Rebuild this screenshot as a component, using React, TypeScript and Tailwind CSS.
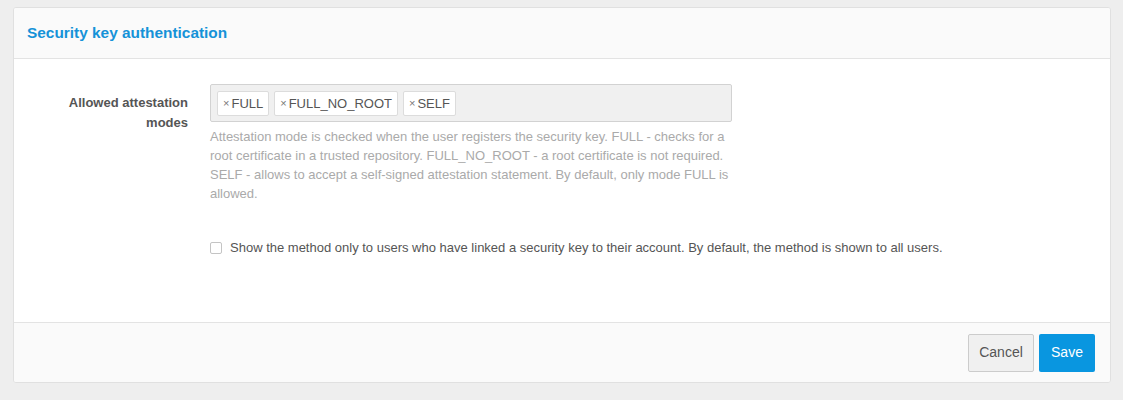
import React from "react";

const Tag = ({ label }: { label: string }) => (
  <span className="inline-flex items-center h-[25px] px-[5px] bg-white border border-[#dcdcdc] rounded-[2px] text-[13px] text-[#555] leading-none">
    <span className="text-[11px] text-[#777] mr-[2px]">×</span>
    {label}
  </span>
);

export default function App() {
  return (
    <div
      className="w-[1123px] h-[400px] bg-[#eeeeee] pt-[7px] px-[13px]"
      style={{ fontFamily: '"Liberation Sans", Arial, sans-serif' }}
    >
      <div className="w-[1098px] border border-[#e0e0e0] rounded-[3px] bg-white overflow-hidden">
        <div className="h-[51px] bg-[#fafafa] border-b border-[#e3e3e3] flex items-center pl-[13px]">
          <h2 className="text-[15.4px] font-bold text-[#1592d8]">Security key authentication</h2>
        </div>
        <div className="h-[263px] pt-[25px]">
          <div className="flex">
            <div className="w-[196px] pr-[22px] text-right pt-[9px] text-[13px] font-bold text-[#555] leading-[20px]">
              Allowed attestation
              <br />
              modes
            </div>
            <div className="w-[522px]">
              <div className="h-[38px] bg-[#f0f0f0] border border-[#d2d2d2] rounded-[2px] flex items-center gap-[5px] px-[6px]">
                <Tag label="FULL" />
                <Tag label="FULL_NO_ROOT" />
                <Tag label="SELF" />
              </div>
              <p className="mt-[5px] text-[13px] leading-[19px] text-[#aaaaaa]">
                Attestation mode is checked when the user registers the security key. FULL - checks for a root certificate in a trusted repository. FULL_NO_ROOT - a root certificate is not required. SELF - allows to accept a self-signed attestation statement. By default, only mode FULL is allowed.
              </p>
            </div>
          </div>
          <div className="flex items-center mt-[35px] pl-[196px]">
            <span className="w-[12px] h-[12px] border border-[#c4c4c4] rounded-[2px] bg-white shrink-0"></span>
            <span className="ml-[8px] text-[13px] text-[#555] leading-[20px]">
              Show the method only to users who have linked a security key to their account. By default, the method is shown to all users.
            </span>
          </div>
        </div>
        <div className="h-[60px] bg-[#fafafa] border-t border-[#e3e3e3] flex items-center justify-end gap-[5px] pr-[15px]">
          <button className="h-[38px] w-[66px] bg-[#f0f0f0] border border-[#cccccc] rounded-[2px] text-[14px] text-[#555]">
            Cancel
          </button>
          <button className="h-[38px] w-[56px] bg-[#0996e0] rounded-[2px] text-[14px] text-white">
            Save
          </button>
        </div>
      </div>
    </div>
  );
}
